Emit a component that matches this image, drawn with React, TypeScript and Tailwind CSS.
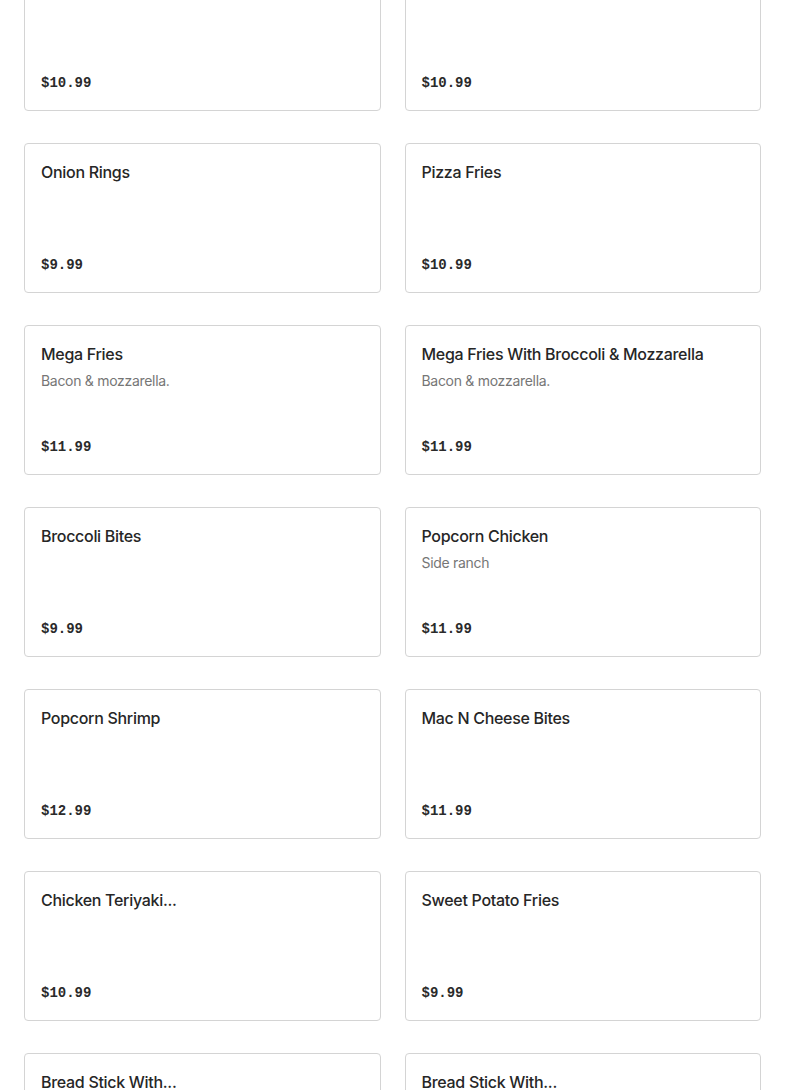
import React from 'react';

type Item = { name: string; price: string; description?: string };

const items: Item[] = [
  { name: 'French Fries', price: '$10.99' },
  { name: 'Cheese Fries', price: '$10.99' },
  { name: 'Onion Rings', price: '$9.99' },
  { name: 'Pizza Fries', price: '$10.99' },
  { name: 'Mega Fries', price: '$11.99', description: 'Bacon & mozzarella.' },
  { name: 'Mega Fries With Broccoli & Mozzarella', price: '$11.99', description: 'Bacon & mozzarella.' },
  { name: 'Broccoli Bites', price: '$9.99' },
  { name: 'Popcorn Chicken', price: '$11.99', description: 'Side ranch' },
  { name: 'Popcorn Shrimp', price: '$12.99' },
  { name: 'Mac N Cheese Bites', price: '$11.99' },
  { name: 'Chicken Teriyaki...', price: '$10.99' },
  { name: 'Sweet Potato Fries', price: '$9.99' },
  { name: 'Bread Stick With...', price: '$8.99' },
  { name: 'Bread Stick With...', price: '$8.99' },
];

const MenuCard = ({ item }: { item: Item }) => (
  <div className="flex h-[150px] flex-col justify-between rounded border border-[#d4d4d4] bg-white px-4 pt-4 pb-[15px]">
    <div>
      <h3 className="text-[16px] font-medium leading-6 tracking-[-0.3px] text-[#262626]">{item.name}</h3>
      {item.description && (
        <p className="mt-[5px] text-[14px] leading-5 tracking-[-0.3px] text-[#767676]">{item.description}</p>
      )}
    </div>
    <span className="font-['Liberation_Mono',monospace] text-[14px] font-bold leading-6 text-[#2a2a2a]">
      {item.price}
    </span>
  </div>
);

export default function App() {
  return (
    <div className="h-[1090px] overflow-hidden bg-white font-['Inter',sans-serif]">
      <div className="-mt-[39px] grid grid-cols-2 gap-x-6 gap-y-8 px-6">
        {items.map((item, i) => (
          <MenuCard key={i} item={item} />
        ))}
      </div>
    </div>
  );
}
